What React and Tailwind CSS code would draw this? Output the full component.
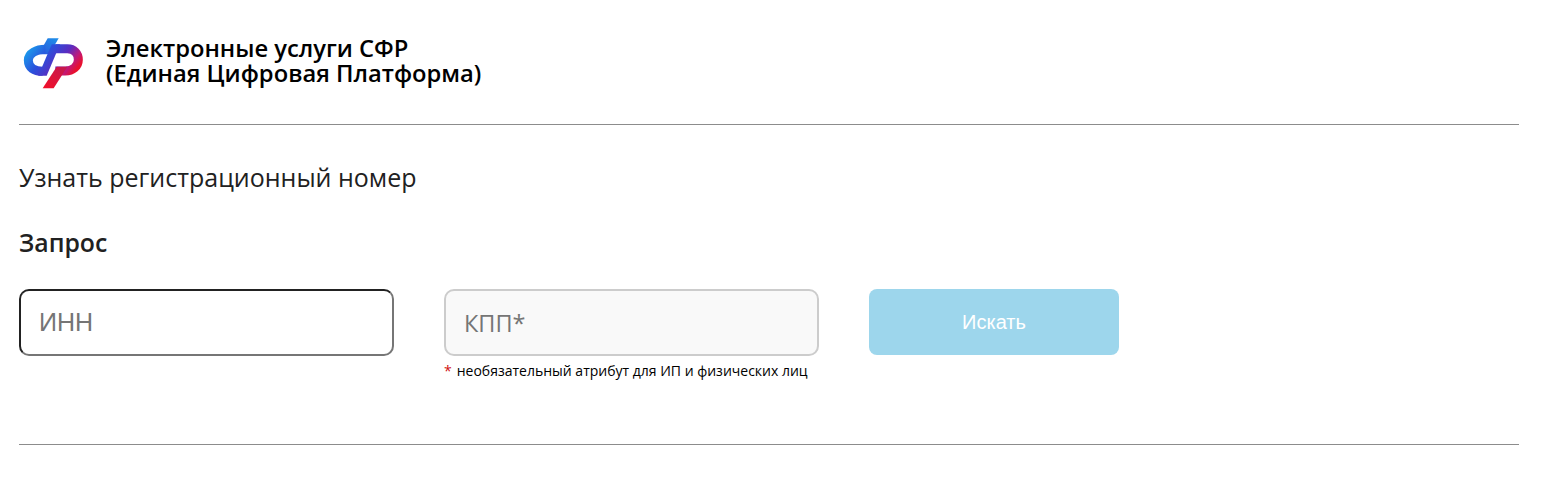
function Logo() {
  return (
    <svg width="90" height="75" viewBox="0 0 270 225" fill="none" className="shrink-0">
      <defs>
        <linearGradient id="ribbon" gradientUnits="userSpaceOnUse" x1="50" y1="75" x2="170" y2="170">
          <stop offset="0" stopColor="#1a9cec" />
          <stop offset="0.35" stopColor="#2a50dc" />
          <stop offset="0.65" stopColor="#5a2cc0" />
          <stop offset="0.85" stopColor="#c0187a" />
          <stop offset="1" stopColor="#e8102e" />
        </linearGradient>
        <linearGradient id="slash" gradientUnits="userSpaceOnUse" x1="130" y1="40" x2="100" y2="90">
          <stop offset="0" stopColor="#1f8ae8" />
          <stop offset="1" stopColor="#2a5adc" />
        </linearGradient>
        <linearGradient id="tail" gradientUnits="userSpaceOnUse" x1="150" y1="125" x2="110" y2="190">
          <stop offset="0" stopColor="#c8184c" />
          <stop offset="1" stopColor="#f0102a" />
        </linearGradient>
      </defs>
      <polygon points="113,40 146,40 118,88 86,88" fill="url(#slash)" />
      <path d="M106 73 C80 73 55 84 55 106 C55 128 72 139 98 139" stroke="url(#ribbon)" strokeWidth="27" />
      <path d="M136 71 L172 71 C192 71 205 85 205 104 C205 124 188 138 166 138 L136 138" stroke="url(#ribbon)" strokeWidth="27" />
      <polygon points="85,152 110,152 150,58 125,58" fill="url(#ribbon)" />
      <polygon points="140,125 172,125 131,190 98,190" fill="url(#tail)" />
    </svg>
  );
}

export default function App() {
  return (
    <div className="h-[500px] bg-white font-['Open_Sans',sans-serif] text-[#212121] overflow-hidden">
      <div className="ml-[19px] w-[1500px]">
        {/* Header */}
        <div className="flex items-center h-[124px]">
          <div className="ml-[-9px] mr-[6px] flex">
            <Logo />
          </div>
          <div className="mb-[2px] text-[23.75px] leading-[25px] font-semibold text-black">
            <div>Электронные услуги СФР</div>
            <div>(Единая Цифровая Платформа)</div>
          </div>
        </div>
        <div className="h-px bg-[#8c8c8c]"></div>

        <h1 className="mt-[36px] text-[25px] leading-[33px] font-normal">Узнать регистрационный номер</h1>
        <h2 className="mt-[33px] text-[24.8px] leading-[30px] font-semibold">Запрос</h2>

        {/* Form */}
        <div className="flex gap-[50px] mt-[32px]">
          <input
            placeholder="ИНН"
            className="w-[375px] h-[67px] px-[18px] rounded-[10px] border-2 border-t-[#222222] border-l-[#222222] border-b-[#767676] border-r-[#767676] bg-white text-[25px] font-['Liberation_Sans',sans-serif] placeholder:text-[#757575] outline-none"
          />
          <div className="w-[375px]">
            <input
              placeholder="КПП*"
              className="w-full h-[67px] px-[18px] rounded-[10px] border-2 border-[#cccccc] bg-[#f9f9f9] text-[23.5px] placeholder:text-[#757575] outline-none"
            />
            <div className="mt-[6px] text-[14px] leading-[18px] text-black">
              <span className="text-[#d01010] mr-[5px]">*</span>
              необязательный атрибут для ИП и физических лиц
            </div>
          </div>
          <button className="w-[250px] h-[66px] rounded-[8px] bg-[#9dd6ec] text-white text-[20px] font-['Liberation_Sans',sans-serif] font-normal">
            Искать
          </button>
        </div>

        <div className="h-px bg-[#8c8c8c] mt-[64px]"></div>
      </div>
    </div>
  );
}
